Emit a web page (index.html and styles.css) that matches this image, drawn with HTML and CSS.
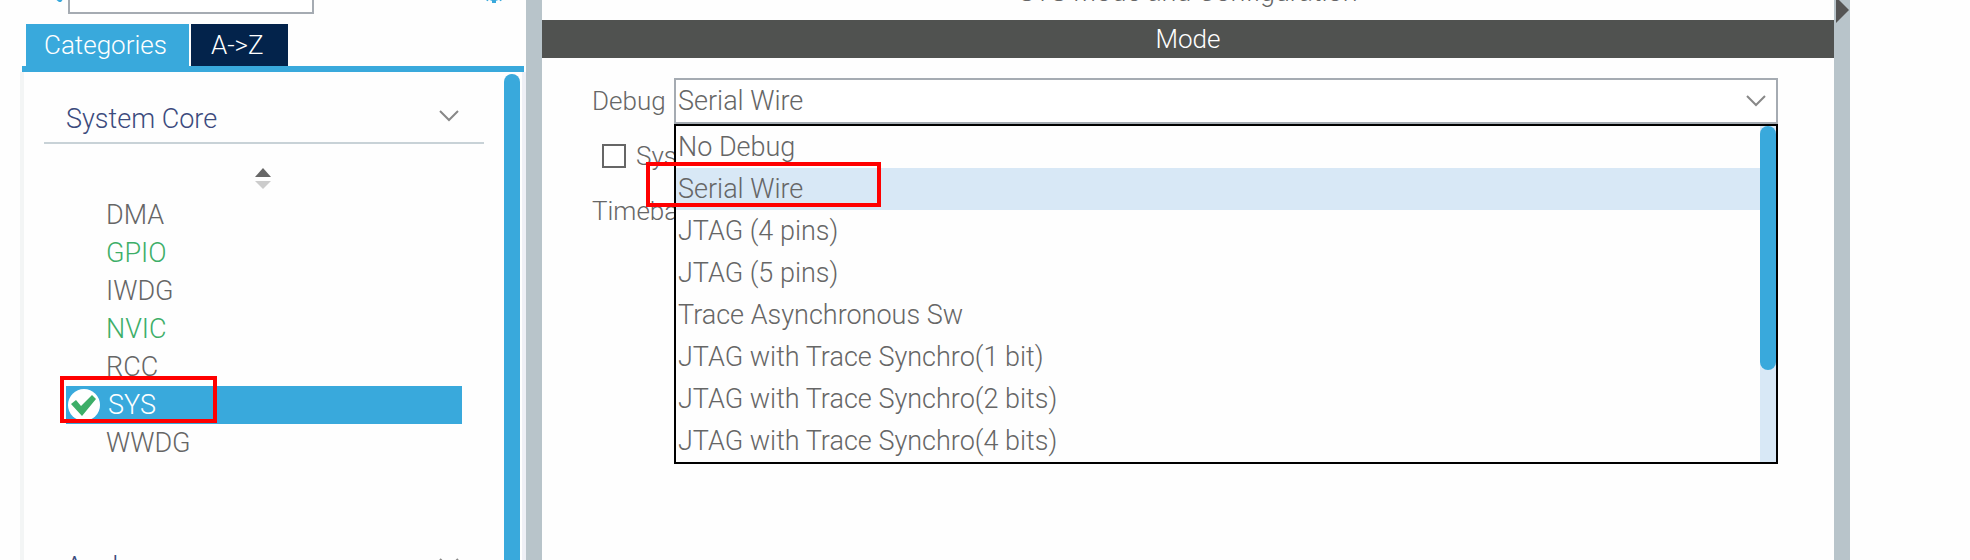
FILE: index.html
```html
<!DOCTYPE html>
<html lang="en">
<head>
<meta charset="utf-8">
<title>SYS Mode and Configuration</title>
<link rel="stylesheet" href="styles.css">
</head>
<body>
<div class="app">
  <aside class="sidebar">
    <div class="toolbar">
      <div class="toolbar-row">
        <svg class="search-icon" viewBox="0 0 18 26" width="18" height="26" aria-hidden="true"><path d="M4 18h10v2l-3 4H9l-5-4z"/></svg>
        <input class="search" type="text" aria-label="Search">
        <svg class="gear" viewBox="0 0 28 28" width="28" height="28" aria-hidden="true"><circle cx="14" cy="14" r="8"/><path d="M14 14v12M14 14l8 9M14 14l-8 9M14 14l11 3M14 14L3 17M14 14V2M14 14l8-9M14 14L6 5"/></svg>
      </div>
    </div>
    <div class="tabs" role="tablist">
      <button class="tab active" role="tab" aria-selected="true">Categories</button>
      <button class="tab" role="tab" aria-selected="false">A-&gt;Z</button>
    </div>
    <div class="panel">
      <div class="groups">
        <button class="group-head">System Core
          <svg class="chevron" viewBox="0 0 22 14" width="22" height="14" aria-hidden="true"><path d="M2 2l9 9 9-9"/></svg>
        </button>
        <svg class="sorter" viewBox="0 0 16 22" width="16" height="22" aria-hidden="true"><path class="up" d="M8 0l8 9H0z"/><path class="down" d="M0 13h16l-8 8z"/></svg>
        <ul class="items">
          <li class="item">DMA</li>
          <li class="item green">GPIO</li>
          <li class="item">IWDG</li>
          <li class="item green">NVIC</li>
          <li class="item">RCC</li>
          <li class="item selected">
            <svg class="check" viewBox="0 0 32 32" width="32" height="32" aria-hidden="true"><circle cx="16" cy="16" r="16"/><path d="M3 15l5-4 5 6L24 6l4 4-14 17z"/></svg>
            SYS
            <span class="mark mark-sys"></span>
          </li>
          <li class="item">WWDG</li>
        </ul>
        <button class="group-head">Analog
          <svg class="chevron" viewBox="0 0 22 14" width="22" height="14" aria-hidden="true"><path d="M2 2l9 9 9-9"/></svg>
        </button>
      </div>
      <div class="scrollbar"></div>
    </div>
  </aside>
  <div class="divider"></div>
  <main class="main">
    <div class="title-bar"><h1 class="title">SYS Mode and Configuration</h1></div>
    <h2 class="mode-bar">Mode</h2>
    <form class="form">
      <div class="field">
        <label for="debug">Debug</label>
        <div class="combo">
          <select id="debug" class="select"><option>Serial Wire</option></select>
          <svg class="chevron combo-arrow" viewBox="0 0 22 14" width="22" height="14" aria-hidden="true"><path d="M2 2l9 9 9-9"/></svg>
          <div class="popup">
            <ul class="options" role="listbox" aria-label="Debug">
              <li class="option" role="option">No Debug</li>
              <li class="option current" role="option" aria-selected="true">Serial Wire<span class="mark mark-option"></span></li>
              <li class="option" role="option">JTAG (4 pins)</li>
              <li class="option" role="option">JTAG (5 pins)</li>
              <li class="option" role="option">Trace Asynchronous Sw</li>
              <li class="option" role="option">JTAG with Trace Synchro(1 bit)</li>
              <li class="option" role="option">JTAG with Trace Synchro(2 bits)</li>
              <li class="option" role="option">JTAG with Trace Synchro(4 bits)</li>
            </ul>
            <div class="track"><div class="thumb"></div></div>
          </div>
        </div>
      </div>
      <div class="check-row">
        <input id="wake" class="box" type="checkbox">
        <label for="wake">System Wake-Up</label>
      </div>
      <div class="field">
        <label for="timebase">Timebase</label>
        <select id="timebase" class="select"><option>SysTick</option></select>
      </div>
    </form>
  </main>
  <div class="divider">
    <svg class="expand" viewBox="0 0 14 26" width="14" height="26" aria-hidden="true"><path d="M1 0l13 13L1 26z"/></svg>
  </div>
  <div class="gutter"></div>
</div>
</body>
</html>
```
FILE: styles.css
```css
* { box-sizing: border-box; }
body {
  margin: 0;
  background: #fefefe;
  color: #666;
  font: 300 26px/32px Roboto, "Liberation Sans", sans-serif;
}
button, input, select { font: inherit; color: inherit; border-radius: 0; }
ul, h1, h2 { margin: 0; padding: 0; list-style: none; font: inherit; }
.app { display: flex; height: 100vh; overflow: hidden; }

.sidebar { flex: 0 0 526px; display: flex; flex-direction: column; min-width: 0; }
.toolbar {
  flex: none;
  height: 24px;
  padding: 0 18px 10px 50px;
  display: flex;
  align-items: flex-end;
}
.toolbar-row { display: flex; align-items: center; flex: 1; }
.search-icon { flex: none; fill: #39a9dc; }
.search { width: 246px; height: 46px; border: 2px solid #a5abb2; background: #fff; }
.gear { margin-left: auto; fill: none; stroke: #39a9dc; stroke-width: 4; }

.tabs {
  flex: none;
  display: flex;
  gap: 2px;
  height: 48px;
  padding-left: 4px;
  margin: 0 2px 0 22px;
  border-bottom: 6px solid #39a9dc;
}
.tab {
  border: 0;
  padding: 0 24px 0 20px;
  background: #03234b;
  color: #fff;
}
.tab.active { background: #39a9dc; padding: 0 22px 0 18px; }

.panel {
  flex: 1;
  display: flex;
  justify-content: space-between;
  min-height: 0;
  margin-left: 20px;
  padding-right: 2px;
  border-left: 4px solid #f3f5f5;
  border-right: 4px solid #eef0f6;
}
.groups { width: 440px; margin-left: 20px; }
.group-head {
  display: flex;
  justify-content: space-between;
  align-items: center;
  width: 100%;
  height: 72px;
  padding: 24px 24px 0 22px;
  border: 0;
  border-bottom: 2px solid #c8d2d7;
  background: none;
  color: #3c4b7d;
  font-size: 27px;
}
.chevron { fill: none; stroke: #888; stroke-width: 2; }
.group-head .chevron { margin-bottom: 6px; }
.sorter { display: block; margin: 24px auto 6px 211px; }
.up { fill: #666; }
.down { fill: #ccc; }
.items { margin: 0 22px 58px; font-size: 27px; }
.item {
  display: flex;
  align-items: center;
  height: 38px;
  padding-left: 40px;
}
.green { color: #3dae68; }
.selected {
  position: relative;
  gap: 8px;
  padding-left: 2px;
  background: #39a9dc;
  color: #fff;
}
.check circle { fill: #fff; }
.check path { fill: #3dae68; }
.scrollbar {
  width: 16px;
  margin-top: 2px;
  border-radius: 8px 8px 0 0;
  background: #39a9dc;
}
.mark { position: absolute; border: 4px solid #f00; }
.mark-sys { left: -6px; top: -10px; width: 157px; height: 47px; }
.mark-option { left: -30px; top: -6px; width: 235px; height: 45px; }

.divider { flex: 0 0 16px; background: #b8c4ca; }
.expand { display: block; margin: -3px 0 0 1px; fill: #555; }
.gutter { flex: 0 0 120px; }

.main { flex: 1; min-width: 0; }
.title-bar {
  height: 20px;
  display: flex;
  align-items: flex-end;
  justify-content: center;
  padding-bottom: 12px;
  font-size: 27px;
}
.mode-bar {
  height: 38px;
  line-height: 38px;
  text-align: center;
  background: #505250;
  color: #fff;
}
.form { padding: 20px 56px 0 50px; }
.field { display: flex; align-items: center; }
.field label { flex: 0 0 82px; }
.combo { flex: 1; position: relative; }
.select {
  display: block;
  width: 100%;
  height: 46px;
  padding: 0 2px;
  border: 2px solid #a5abb2;
  background: #fff;
  font-size: 27px;
  appearance: none;
}
.combo-arrow { position: absolute; right: 11px; top: 16px; }
.popup {
  position: absolute;
  top: 100%;
  left: 0;
  right: 0;
  z-index: 1;
  display: flex;
  border: 2px solid #000;
  background: #fefefe;
  font-size: 27px;
}
.options { flex: 1; }
.option { height: 42px; line-height: 42px; padding-left: 2px; }
.current { position: relative; background: #d8e8f6; }
.track { width: 16px; background: #d8e8f6; }
.thumb { height: 244px; border-radius: 8px; background: #39a9dc; }
.check-row { display: flex; align-items: center; gap: 10px; padding: 16px 0 16px 10px; }
.box {
  appearance: none;
  width: 24px;
  height: 24px;
  margin: 0;
  border: 2px solid #666;
  background: #fff;
}
```
